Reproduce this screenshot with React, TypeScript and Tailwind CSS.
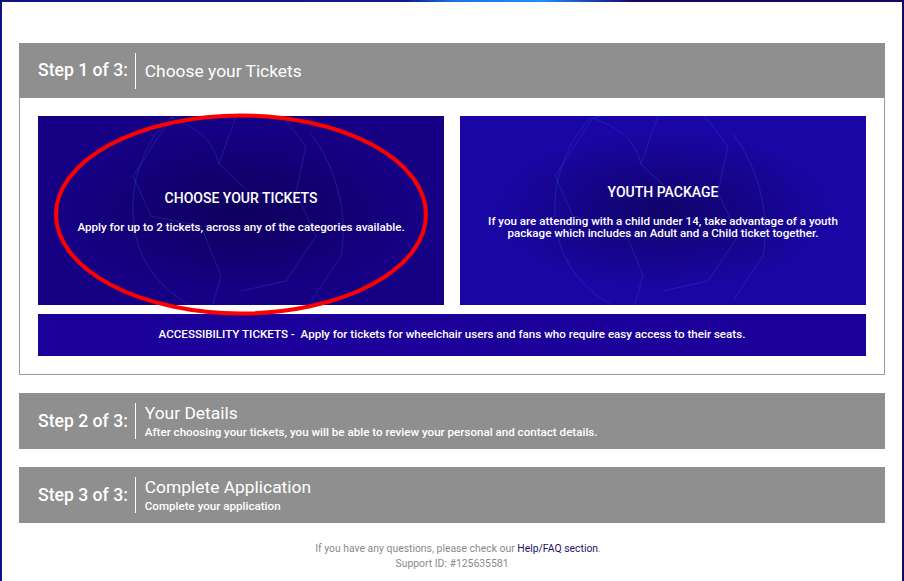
const font = { fontFamily: "Roboto, 'Liberation Sans', sans-serif" };

function Ball() {
  return (
    <svg
      className="absolute left-1/2 top-1/2 -translate-x-1/2 -translate-y-1/2"
      width="260"
      height="210"
      viewBox="0 0 260 210"
      fill="none"
    >
      <g stroke="#2a4fd0" strokeOpacity="0.35" strokeWidth="1">
        <path d="M58 12 C30 40 20 80 22 110 C24 150 45 180 80 200" />
        <path d="M92 4 L60 12 L22 70 L40 110" />
        <path d="M125 10 L168 6 L195 40 L185 86 L140 88 L108 58 Z" />
        <path d="M200 28 C225 60 238 110 230 150 L200 195" />
        <path d="M40 110 L90 120 L110 170 L100 205" />
        <path d="M185 86 L205 130 L175 175 L130 185" />
        <path d="M60 12 C80 20 100 28 108 58" />
      </g>
    </svg>
  );
}

function Card({
  title,
  text,
  bg,
}: {
  title: string;
  text: string;
  bg: string;
}) {
  return (
    <div className={`relative h-[189px] overflow-hidden ${bg}`}>
      <div className="absolute inset-0 bg-[radial-gradient(ellipse_at_center,rgba(8,0,60,0.55)_0%,rgba(8,0,60,0)_60%)]" />
      <Ball />
      <div className="relative flex h-full flex-col items-center justify-center px-[20px] text-center text-white">
        <div className="text-[14px] font-medium leading-[18px]">{title}</div>
        <div className="mt-[14px] text-[11.6px] font-medium leading-[12px]">{text}</div>
      </div>
    </div>
  );
}

function StepHeader({
  step,
  title,
  sub,
  tall = true,
}: {
  step: string;
  title: string;
  sub?: string;
  tall?: boolean;
}) {
  return (
    <div
      className={`flex items-center bg-[#8e8f8e] pl-[19px] text-white ${tall ? "h-[56px]" : "h-[55px]"}`}
    >
      <div className="text-[17.6px] font-medium">{step}</div>
      <div className="ml-[7px] h-[36px] w-px bg-white" />
      <div className="ml-[9px] flex flex-col">
        <div className="text-[17.4px] leading-[22px]">{title}</div>
        {sub && <div className="text-[11.6px] font-medium leading-[16px]">{sub}</div>}
      </div>
    </div>
  );
}

export default function App() {
  return (
    <div
      className="h-[581px] w-[904px] overflow-hidden bg-[linear-gradient(90deg,#0f1380_0%,#0d1c8a_45%,#1f6fe8_50%,#1e90ff_60%,#12086a_70%,#12086a_100%)] px-[2px] pt-[2px]"
      style={font}
    >
      <div className="relative h-[579px] w-[900px] bg-white px-[17px] pt-[41px]">
        <StepHeader step="Step 1 of 3:" title="Choose your Tickets" tall={false} />
        <div className="border-x border-b border-[#9a9a9a] px-[18px] pb-[18px] pt-[18px]">
          <div className="grid grid-cols-2 gap-[16px]">
            <Card
              bg="bg-[#160083]"
              title="CHOOSE YOUR TICKETS"
              text="Apply for up to 2 tickets, across any of the categories available."
            />
            <Card
              bg="bg-[#1a06a4]"
              title="YOUTH PACKAGE"
              text="If you are attending with a child under 14, take advantage of a youth package which includes an Adult and a Child ticket together."
            />
          </div>
          <div className="mt-[9px] flex h-[42px] items-center justify-center bg-[#1b0099] text-[11.6px] font-medium text-white">
            ACCESSIBILITY TICKETS -&nbsp; Apply for tickets for wheelchair users and fans who require easy access to their seats.
          </div>
        </div>
        <div className="mt-[18px]">
          <StepHeader
            step="Step 2 of 3:"
            title="Your Details"
            sub="After choosing your tickets, you will be able to review your personal and contact details."
          />
        </div>
        <div className="mt-[18px]">
          <StepHeader
            step="Step 3 of 3:"
            title="Complete Application"
            sub="Complete your application"
          />
        </div>
        <div className="mt-[18px] text-center text-[10.4px] leading-[15px] text-[#8a8a8a]">
          <div className="pl-[12px]">
            If you have any questions, please check our{" "}
            <span className="text-[#1c1466]">Help/FAQ section</span>.
          </div>
          <div>Support ID: #125635581</div>
        </div>
        <svg
          className="pointer-events-none absolute left-[51px] top-[110px]"
          width="376"
          height="205"
          viewBox="0 0 376 205"
        >
          <ellipse cx="188" cy="102.5" rx="185" ry="99" fill="none" stroke="#ff0000" strokeWidth="4" />
        </svg>
      </div>
    </div>
  );
}
